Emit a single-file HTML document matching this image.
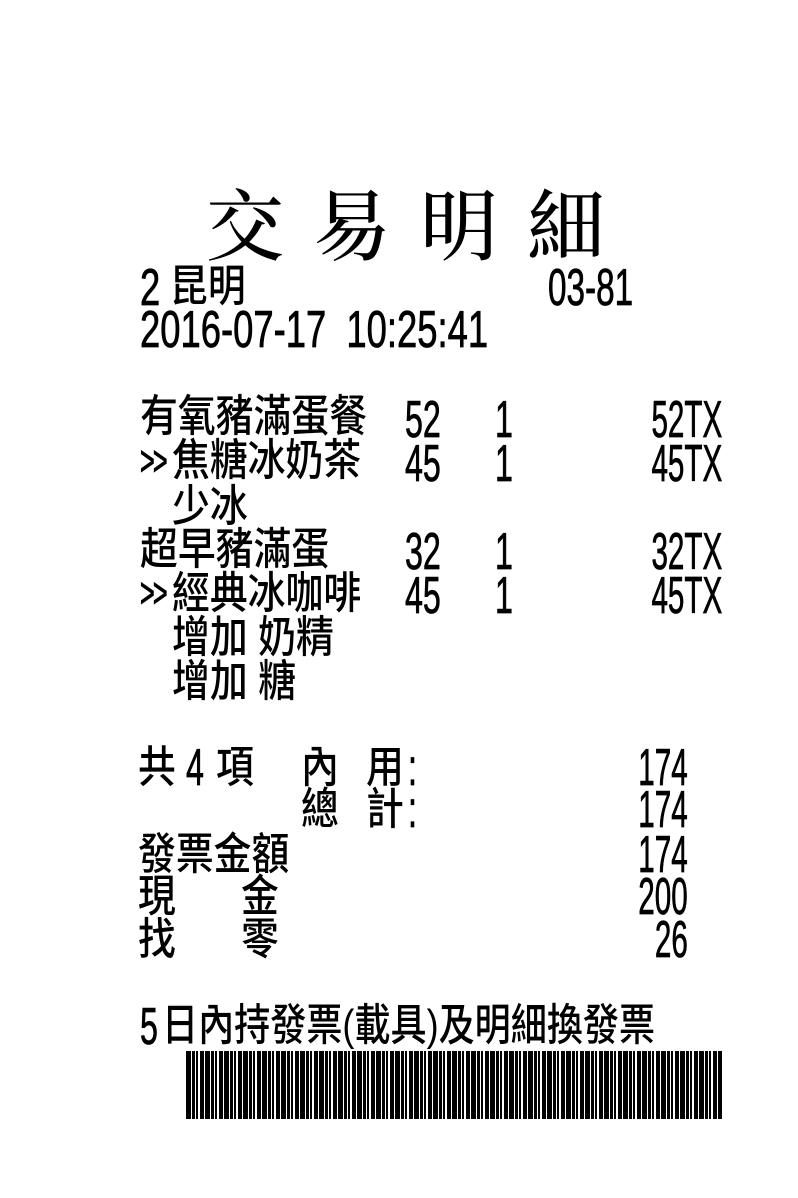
<!DOCTYPE html>
<html><head><meta charset="utf-8"><style>
html,body{margin:0;padding:0;background:#fff;}
body{width:798px;height:1198px;position:relative;overflow:hidden;}
.c,.d,.r,.g{position:absolute;white-space:pre;line-height:1;color:#000;}
.c{font-family:"Liberation Sans","Noto Sans CJK TC",sans-serif;font-size:44px;font-weight:500;transform-origin:left top;transform:scaleX(0.86);}
.d{font-family:"Liberation Sans",sans-serif;font-size:52px;transform-origin:left top;transform:scaleX(0.62);-webkit-text-stroke:0.8px #000;}
.r{font-family:"Liberation Sans",sans-serif;font-size:52px;transform-origin:right top;transform:scaleX(0.57);text-align:right;-webkit-text-stroke:0.8px #000;}
.g{font-family:"Liberation Sans",sans-serif;font-size:42px;letter-spacing:-3px;transform-origin:left top;transform:scaleX(0.6);-webkit-text-stroke:1px #000;}
.title{position:absolute;left:206px;top:182px;font-family:"Noto Serif CJK SC","Noto Serif CJK TC",serif;font-size:78px;font-weight:500;letter-spacing:29px;white-space:pre;line-height:1;}
.bar{position:absolute;left:186px;top:1051px;width:536px;height:68px;
background:repeating-linear-gradient(90deg,#000 0 5px,#fff 5px 6px,#000 6px 9px,#fff 9px 10px,#000 10px 12px,#fff 12px 14px,#000 14px 18px,#fff 18px 19px);}
</style></head><body>
<div class="title">交易明細</div>

<div class="d" style="left:140px;top:262px;transform:scaleX(0.7)">2</div>
<div class="c" style="left:170px;top:265px">昆明</div>
<div class="d" style="left:548px;top:262px;transform:scaleX(0.64)">03-81</div>
<div class="d" style="left:140px;top:304px;transform:scaleX(0.7)">2016-07-17  10:25:41</div>

<div class="c" style="left:140px;top:395px">有氧豬滿蛋餐</div>
<div class="d" style="left:405px;top:394px">52</div>
<div class="d" style="left:495px;top:394px">1</div>
<div class="r" style="right:76px;top:394px">52TX</div>

<div class="g" style="left:140px;top:440px">&gt;&gt;</div>
<div class="c" style="left:172px;top:439px">焦糖冰奶茶</div>
<div class="d" style="left:405px;top:438px">45</div>
<div class="d" style="left:495px;top:438px">1</div>
<div class="r" style="right:76px;top:438px">45TX</div>

<div class="c" style="left:172px;top:485px">少冰</div>

<div class="c" style="left:140px;top:528px">超早豬滿蛋</div>
<div class="d" style="left:405px;top:526px">32</div>
<div class="d" style="left:495px;top:526px">1</div>
<div class="r" style="right:76px;top:526px">32TX</div>

<div class="g" style="left:140px;top:572px">&gt;&gt;</div>
<div class="c" style="left:172px;top:572px">經典冰咖啡</div>
<div class="d" style="left:405px;top:570px">45</div>
<div class="d" style="left:495px;top:570px">1</div>
<div class="r" style="right:76px;top:570px">45TX</div>

<div class="c" style="left:172px;top:616px">增加 奶精</div>
<div class="c" style="left:172px;top:660px">增加 糖</div>

<div class="c" style="left:138px;top:746px">共</div>
<div class="d" style="left:186px;top:742px">4</div>
<div class="c" style="left:216px;top:746px">項</div>
<div class="c" style="left:301px;top:746px">內</div>
<div class="c" style="left:366px;top:746px">用</div>
<div class="d" style="left:408px;top:742px">:</div>
<div class="r" style="right:110px;top:742px">174</div>

<div class="c" style="left:301px;top:788px">總</div>
<div class="c" style="left:366px;top:788px">計</div>
<div class="d" style="left:408px;top:784px">:</div>
<div class="r" style="right:110px;top:784px">174</div>

<div class="c" style="left:138px;top:833px">發票金額</div>
<div class="r" style="right:110px;top:829px">174</div>

<div class="c" style="left:138px;top:875px">現</div>
<div class="c" style="left:241px;top:875px">金</div>
<div class="r" style="right:110px;top:871px">200</div>

<div class="c" style="left:138px;top:918px">找</div>
<div class="c" style="left:241px;top:918px">零</div>
<div class="r" style="right:110px;top:914px">26</div>

<div class="d" style="left:140px;top:1001px">5</div>
<div class="c" style="left:162px;top:1004px;transform:scaleX(0.82)">日內持發票(載具)及明細換發票</div>

<div class="bar"></div>
</body></html>
